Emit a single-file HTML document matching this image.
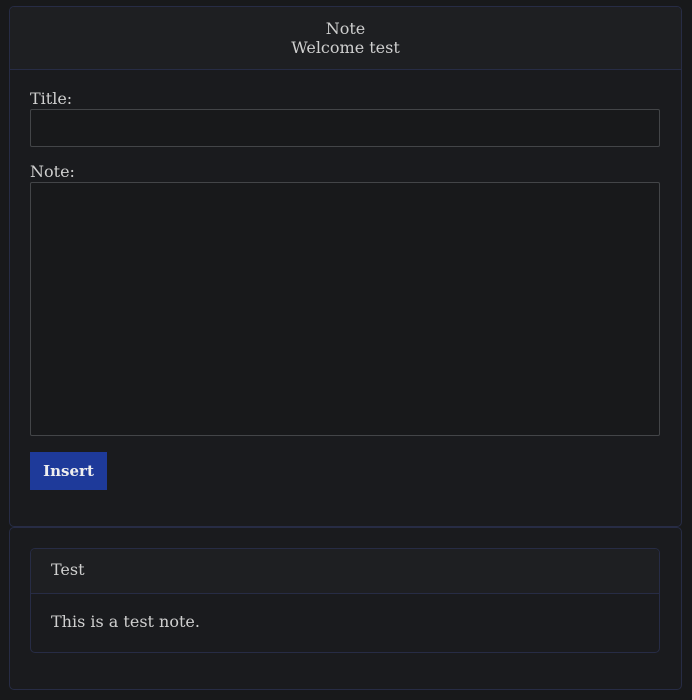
<!DOCTYPE html>
<html><head><style>
body{margin:0;background:#18191b;font-family:"DejaVu Serif",serif;color:#cfcfcf;font-size:16px;width:692px;height:700px;position:relative;overflow:hidden}
.abs{position:absolute;box-sizing:border-box}
.card{border:1px solid #272c45;border-radius:5px;background:#1a1b1e}
</style></head><body>
<div class="abs card" style="left:9px;top:6px;width:673px;height:521px;overflow:hidden">
  <div class="abs" style="left:0;top:0;width:100%;height:63px;background:#1e1f22;border-bottom:1px solid #272c45;text-align:center;padding-top:12px;line-height:19px">Note<br>Welcome test</div>
</div>
<div class="abs" style="left:30px;top:89px;line-height:20px">Title:</div>
<div class="abs" style="left:30px;top:109px;width:630px;height:38px;border:1px solid #434548;border-radius:2px;background:#18191b"></div>
<div class="abs" style="left:30px;top:162px;line-height:20px">Note:</div>
<div class="abs" style="left:30px;top:182px;width:630px;height:254px;border:1px solid #434548;border-radius:2px;background:#18191b"></div>
<div class="abs" style="left:30px;top:452px;width:77px;height:38px;background:#1e3a9a;color:#eee;font-weight:bold;font-size:15px;text-align:center;line-height:38px">Insert</div>
<div class="abs card" style="left:9px;top:527px;width:673px;height:163px"></div>
<div class="abs card" style="left:30px;top:548px;width:630px;height:105px;overflow:hidden">
  <div class="abs" style="left:0;top:0;width:100%;height:45px;background:#1e1f22;border-bottom:1px solid #272c45;padding:11px 0 0 20px;line-height:20px">Test</div>
  <div class="abs" style="left:20px;top:63px;line-height:20px">This is a test note.</div>
</div>
</body></html>
